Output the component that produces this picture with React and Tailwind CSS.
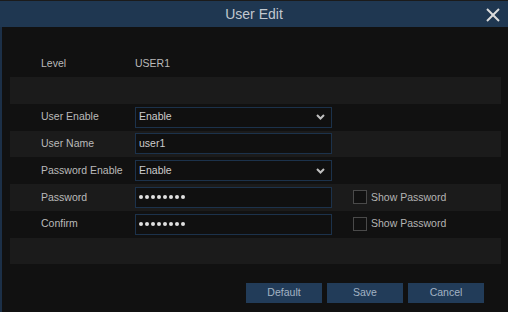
export default function App() {
  const rowH = "h-[26.75px]";
  const Label = ({ children }) => (
    <div className="w-[125px] pl-[31px] text-[10.5px] text-[#bababa] whitespace-nowrap">{children}</div>
  );
  const Box = ({ children }) => (
    <div className="w-[197px] h-[21px] border border-[#1c324b] bg-[#101010] flex items-center pl-[3px] pr-[6px] text-[10.5px] text-[#cdcdcd]">
      {children}
    </div>
  );
  const Chevron = () => (
    <svg width="9" height="6" viewBox="0 0 9 6" className="ml-auto">
      <polyline points="1,1 4.5,4.5 8,1" fill="none" stroke="#c0c0c0" strokeWidth="2" />
    </svg>
  );
  const Dots = () => (
    <div className="flex gap-[2px]">
      {Array.from({ length: 8 }).map((_, i) => (
        <span key={i} className="w-[4px] h-[4px] rounded-full bg-[#e0e0e0]" />
      ))}
    </div>
  );
  const ShowPw = () => (
    <div className="flex items-center ml-[21px]">
      <div className="w-[14px] h-[14px] border border-[#4a4a4a] bg-[#111]" />
      <span className="ml-[4px] text-[10.5px] text-[#b4b4b4]">Show Password</span>
    </div>
  );
  const Btn = ({ children }) => (
    <div className="w-[76px] h-[20px] bg-[#223c59] flex items-center justify-center text-[10.5px] text-[#a3b3c4]">
      {children}
    </div>
  );
  return (
    <div className="w-[508px] h-[312px] bg-[#111111] overflow-hidden flex flex-col font-['Liberation_Sans',Arial,sans-serif]">
      <div className="h-[1px] bg-[#1b1b1b] shrink-0" />
      <div className="h-[26px] shrink-0 bg-[#1f3751] relative flex items-center justify-center">
        <span className="text-[14px] text-[#c2c8cf]">User Edit</span>
        <svg width="14" height="14" viewBox="0 0 14 14" className="absolute right-[8px] top-[7px]">
          <line x1="1" y1="1" x2="13" y2="13" stroke="#dcdcdc" strokeWidth="2" />
          <line x1="13" y1="1" x2="1" y2="13" stroke="#dcdcdc" strokeWidth="2" />
        </svg>
      </div>
      <div className="flex-1 border-l-2 border-[#1c3048] flex flex-col pt-[23px] pl-[8px] pr-[7px]">
        <div className="h-[27px] flex items-center">
          <Label>Level</Label>
          <span className="text-[10.5px] text-[#bababa]">USER1</span>
        </div>
        <div className={`${rowH} bg-[#1b1b1b]`} />
        <div className={`${rowH} flex items-center`}>
          <Label>User Enable</Label>
          <Box>
            <span>Enable</span>
            <Chevron />
          </Box>
        </div>
        <div className={`${rowH} flex items-center bg-[#1b1b1b]`}>
          <Label>User Name</Label>
          <Box>
            <span>user1</span>
          </Box>
        </div>
        <div className={`${rowH} flex items-center`}>
          <Label>Password Enable</Label>
          <Box>
            <span>Enable</span>
            <Chevron />
          </Box>
        </div>
        <div className={`${rowH} flex items-center bg-[#1b1b1b]`}>
          <Label>Password</Label>
          <Box>
            <Dots />
          </Box>
          <ShowPw />
        </div>
        <div className={`${rowH} flex items-center`}>
          <Label>Confirm</Label>
          <Box>
            <Dots />
          </Box>
          <ShowPw />
        </div>
        <div className={`${rowH} bg-[#1b1b1b]`} />
        <div className="mt-[19px] flex justify-end gap-[5px] pr-[17px]">
          <Btn>Default</Btn>
          <Btn>Save</Btn>
          <Btn>Cancel</Btn>
        </div>
      </div>
    </div>
  );
}
